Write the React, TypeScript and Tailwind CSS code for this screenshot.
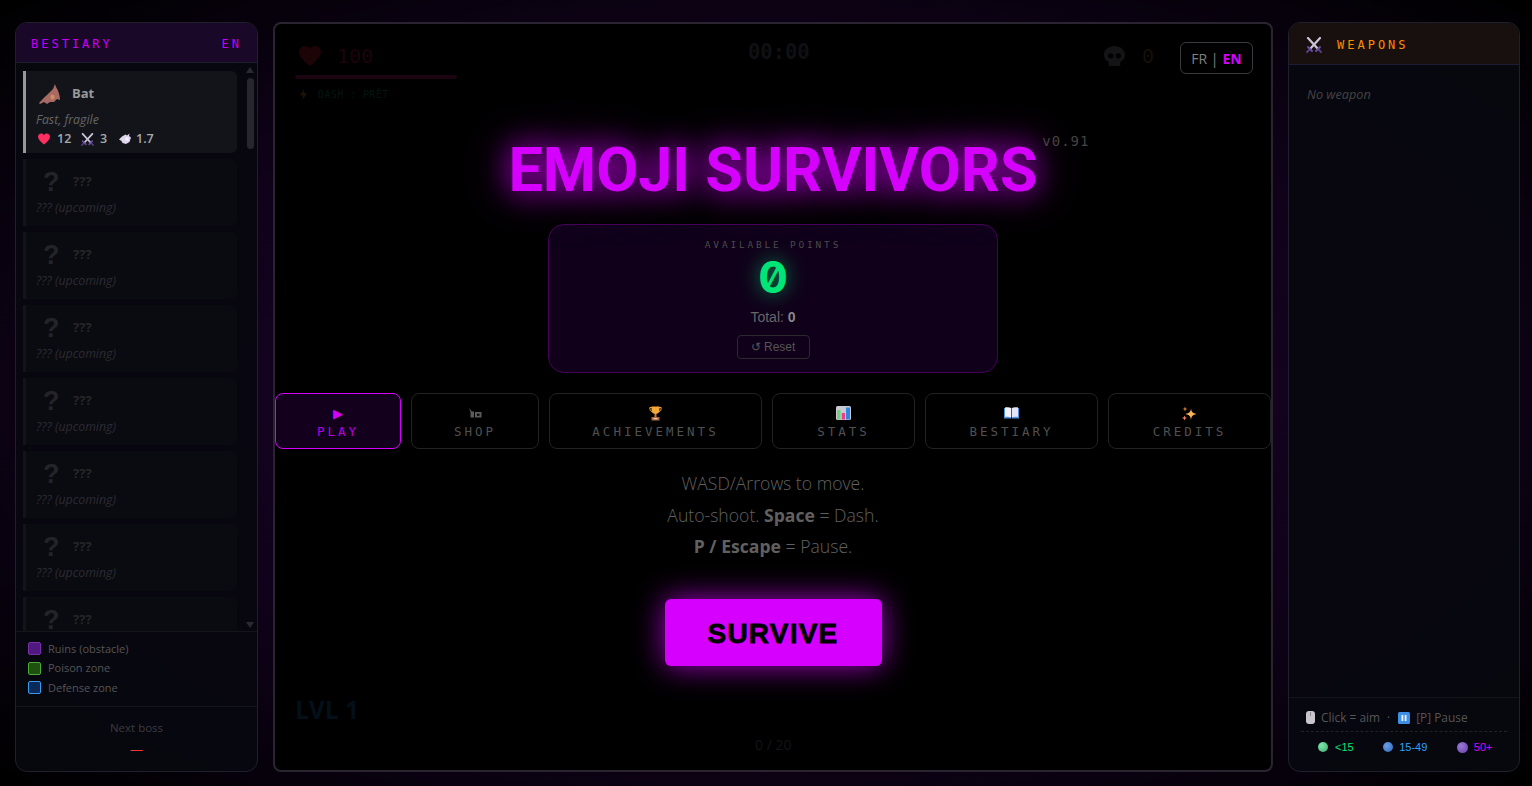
import type { ReactNode } from "react";

const mono = "font-['DejaVu_Sans_Mono',monospace]";

const UNKNOWN = [0, 1, 2, 3, 4, 5, 6];

const BatIcon = () => (
  <svg width="22" height="21" viewBox="0 0 22 21">
    <path d="M0 19C3 16 5 13 8 11C10 9 12 7 14 5L16 0L17 3C19 6 21 11 21 16L18 15L15 18L11 18L8 20L5 18L1 20Z" fill="#a86a62" />
    <ellipse cx="13.500" cy="13" rx="2" ry="2.500" fill="#d0905a" />
  </svg>
);

const HeartIcon = ({ size = 12, fill = "#ff2f62" }: { size?: number; fill?: string }) => (
  <svg width={size} height={size} viewBox="0 0 24 24">
    <path d="M12 23C5 17 0 12.500 0 7.500C0 3.500 3 1 6.500 1C9 1 11 2.300 12 4.500C13 2.300 15 1 17.500 1C21 1 24 3.500 24 7.500C24 12.500 19 17 12 23Z" fill={fill} />
  </svg>
);

const SwordsIcon = ({ size = 13 }: { size?: number }) => (
  <svg width={size} height={size} viewBox="0 0 16 16" fill="none" strokeLinecap="round">
    <path d="M2 1L12 12M14 1L4 12" stroke="#c9c5d6" strokeWidth="2.200" />
    <path d="M10 14L14 10M6 14L2 10" stroke="#6d4fa3" strokeWidth="1.800" />
    <path d="M13 13L15 15M3 13L1 15" stroke="#5a3f8c" strokeWidth="1.800" />
  </svg>
);

const PuffIcon = () => (
  <svg width="12" height="12" viewBox="0 0 12 12">
    <path d="M0 6.500L3 3.500L6.500 1.500L8 2.500L10.500 0.500L10 3L12 4.500L10.500 9L7 11L3.500 10L2.500 8Z" fill="#ddd6ec" />
    <circle cx="8" cy="6" r="1.800" fill="#f6f3fc" />
  </svg>
);

const BoltIcon = () => (
  <svg width="7" height="11" viewBox="0 0 7 11">
    <path d="M4 0L0 6.500H3L2.500 11L7 4H3.800Z" fill="#1e1204" />
  </svg>
);

const SkullIcon = () => (
  <svg width="23" height="23" viewBox="0 0 24 24">
    <path fillRule="evenodd" d="M12 1C5.500 1 1 5.200 1 10.500C1 14 3 16.500 6 17.800V22H18V17.800C21 16.500 23 14 23 10.500C23 5.200 18.500 1 12 1ZM8 8.500A2.800 2.800 0 1 1 8 14.100A2.800 2.800 0 1 1 8 8.500ZM16 8.500A2.800 2.800 0 1 1 16 14.100A2.800 2.800 0 1 1 16 8.500Z" fill="#141416" />
  </svg>
);

const ShopIcon = () => (
  <svg width="13" height="10" viewBox="0 0 13 10" fill="#5a5a5a">
    <path d="M0 0L3 3.500H5V9.500H1.500V4Z" />
    <path fillRule="evenodd" d="M6 4H12.500V9.500H6ZM8 5.800V7.800H10.500V5.800Z" />
  </svg>
);

const TrophyIcon = () => (
  <svg width="13" height="15" viewBox="0 0 13 15" fill="none">
    <path d="M2.800 1.500H0.800C0.800 4 1.500 5.500 3.500 6M10.200 1.500H12.200C12.200 4 11.500 5.500 9.500 6" stroke="#f0a53a" strokeWidth="1" />
    <path d="M2.500 0.500H10.500V4C10.500 6.500 8.500 8 6.500 8C4.500 8 2.500 6.500 2.500 4Z" fill="#f5a83a" />
    <rect x="5.500" y="8" width="2" height="3" fill="#c97b2c" />
    <rect x="2.500" y="11" width="8" height="3.500" rx="0.500" fill="#a86a42" />
    <rect x="4.500" y="12" width="4" height="1.300" fill="#e8c9a0" />
  </svg>
);

const ChartIcon = () => (
  <svg width="15" height="14" viewBox="0 0 15 14">
    <rect width="15" height="14" rx="1.500" fill="#c9c9d2" />
    <rect x="1" y="4" width="3.500" height="9.500" fill="#6fd37a" />
    <rect x="5.800" y="7" width="3.200" height="6.500" fill="#ee3f86" />
    <rect x="10" y="1.500" width="4" height="12" fill="#2f86e0" />
  </svg>
);

const BookIcon = () => (
  <svg width="15" height="12" viewBox="0 0 15 12">
    <path d="M0 1H7V11.500H0Z" fill="#4f8fe0" />
    <path d="M8 1H15V11.500H8Z" fill="#4f8fe0" />
    <path d="M1 0.500C3 0 5.500 0 7.200 1V10.500C5.500 9.700 3 9.700 1 10Z" fill="#f2f2fa" />
    <path d="M14 0.500C12 0 9.500 0 7.800 1V10.500C9.500 9.700 12 9.700 14 10Z" fill="#e4e4f4" />
  </svg>
);

const SparkleIcon = () => (
  <svg width="15" height="15" viewBox="0 0 15 15">
    <path d="M9 2.500C9.500 6 10.500 7 14.500 8C10.500 9 9.500 10 9 14C8.500 10 7.500 9 3.500 8C7.500 7 8.500 6 9 2.500Z" fill="#fdb55a" />
    <path d="M3 0.500L3.600 2.400L5.500 3L3.600 3.600L3 5.500L2.400 3.600L0.500 3L2.400 2.400Z" fill="#f7913f" />
    <path d="M2.500 9.500L3.200 11.300L5 12L3.200 12.700L2.500 14.500L1.800 12.700L0 12L1.800 11.300Z" fill="#f2805a" />
  </svg>
);

const MouseIcon = () => (
  <svg width="9" height="13" viewBox="0 0 9 13">
    <rect width="9" height="13" rx="3" fill="#c9c5cc" />
    <rect x="4" y="1" width="1" height="4" fill="#8d8990" />
  </svg>
);

const PauseIcon = () => (
  <svg width="12" height="12" viewBox="0 0 12 12">
    <rect width="12" height="12" rx="1.500" fill="#3f8fe6" />
    <rect x="3.500" y="3" width="1.800" height="6" fill="#e8f2ff" />
    <rect x="6.700" y="3" width="1.800" height="6" fill="#e8f2ff" />
  </svg>
);

const Tab = ({ icon, label, width, active }: { icon: ReactNode; label: string; width: string; active?: boolean }) => (
  <button
    className={`${width} h-[56px] shrink-0 flex flex-col items-center pt-[11px] rounded-lg border ${
      active ? "border-[#d600ff] bg-[#12001c] text-[#b800dc]" : "border-[#222] text-[#505050]"
    }`}
  >
    <span className={`h-[16px] flex items-center text-[13px] leading-[16px] ${active ? "text-[#d600ff]" : ""}`}>{icon}</span>
    <span className={`${mono} mt-[3px] text-[12.500px] leading-[16px] tracking-[3px]`}>{label}</span>
  </button>
);

const LegendRow = ({ label, box }: { label: string; box: string }) => (
  <div className="flex items-center gap-[7px] h-[19.500px]">
    <span className={`w-[13px] h-[13px] rounded-[2px] border ${box}`} />
    <span className="text-[11px] text-[#555]">{label}</span>
  </div>
);

export default function App() {
  return (
    <div className="w-[1532px] h-[786px] overflow-hidden bg-[radial-gradient(ellipse_at_center,#1f0530_0%,#0f0219_60%,#000_100%)] font-['Open_Sans',sans-serif] flex gap-[15px] pl-[15px] pt-[22px]">
      {/* Left: bestiary */}
      <aside className="w-[243px] h-[750px] shrink-0 flex flex-col rounded-xl border border-[#20202c] bg-[#08080f]/90 overflow-hidden">
        <div className="h-[40px] shrink-0 flex items-center justify-between pt-[2px] pl-[15px] pr-[15px] bg-[#1a0828] border-b border-[#1e1e2c]">
          <span className={`${mono} text-[12px] tracking-[3px] text-[#c800f5]`}>BESTIARY</span>
          <span className={`${mono} text-[12px] tracking-[3px] text-[#c800f5]`}>EN</span>
        </div>
        <div className="relative flex-1 overflow-hidden pl-[7px] pt-[8px] flex flex-col gap-[6px]">
          <div className="w-[214px] h-[82px] shrink-0 rounded-r-md border-l-[3px] border-[#999] bg-[#12141a] pl-[10px] pt-[9px]">
            <div className="flex items-center gap-[11px] h-[28px] pl-[3px]">
              <BatIcon />
              <span className="text-[13px] font-bold text-[#999]">Bat</span>
            </div>
            <div className="text-[12.300px] italic text-[#666] mt-[3px]">Fast, fragile</div>
            <div className="mt-[1px] flex items-center text-[12.500px] font-semibold text-[#aaa] leading-[18px] pl-[2px]">
              <HeartIcon />
              <span className="ml-[7px] w-[24px]">12</span>
              <SwordsIcon />
              <span className="ml-[6px] w-[19px]">3</span>
              <PuffIcon />
              <span className="ml-[5px]">1.7</span>
            </div>
          </div>
          {UNKNOWN.map((i) => (
            <div key={i} className="w-[214px] h-[67px] shrink-0 rounded-r-md border-l-[3px] border-[#131318] bg-[#0a0a11] pl-[10px] pt-[9px]">
              <div className="flex items-center h-[28px]">
                <span className="w-[37px] pl-[7px] font-['Liberation_Sans',sans-serif] text-[27px] font-bold leading-none text-[#242428]">?</span>
                <span className="text-[13px] font-bold text-[#262628]">???</span>
              </div>
              <div className="text-[12.300px] italic text-[#2c2c32] mt-[3px]">??? (upcoming)</div>
            </div>
          ))}
          {/* scrollbar */}
          <div className="absolute right-[3px] top-0 bottom-0 w-[8px]">
            <div className="absolute top-[4px] left-0 border-x-4 border-x-transparent border-b-[6px] border-b-[#2a2a30]" />
            <div className="absolute top-[15px] left-[1px] w-[7px] h-[71px] rounded-full bg-[#26262c]" />
            <div className="absolute bottom-[3px] left-0 border-x-4 border-x-transparent border-t-[6px] border-t-[#2a2a30]" />
          </div>
        </div>
        <div className="h-[75px] shrink-0 border-t border-[#14141a] px-[12px] pt-[7px]">
          <LegendRow label="Ruins (obstacle)" box="bg-[#4f1a80] border-[#7a2ea8]" />
          <LegendRow label="Poison zone" box="bg-[#1f5010] border-[#4fa83a]" />
          <LegendRow label="Defense zone" box="bg-[#0a2a5a] border-[#3a9aee]" />
        </div>
        <div className="h-[65px] shrink-0 border-t border-[#14141a] flex flex-col items-center pt-[12px]">
          <span className="text-[11.500px] text-[#3c3c40]">Next boss</span>
          <span className="text-[13px] leading-[16px] mt-[5px] text-[#ff3333]">—</span>
        </div>
      </aside>

      {/* Center: start screen */}
      <main className="relative w-[1000px] h-[750px] shrink-0 rounded-lg border-2 border-[#2a2430] bg-black flex flex-col items-center overflow-hidden">
        {/* faded HUD under the menu */}
        <div className="absolute left-[20px] top-[18px] w-[162px]">
          <div className={`${mono} flex items-center gap-[16px] pl-[4px] text-[20px] leading-[28px] text-[#1c030c]`}>
            <HeartIcon size={22} fill="#1c0407" />
            <span>100</span>
          </div>
          <div className="mt-[5px] h-[4px] rounded-full bg-[#1c0410]" />
          <div className={`${mono} mt-[8px] flex items-center gap-[11px] pl-[5px] text-[10px] tracking-[0.400px] text-[#04160e]`}>
            <BoltIcon />
            <span>DASH : PRÊT</span>
          </div>
        </div>
        <div className={`${mono} absolute left-[473px] top-[13px] text-[20.500px] font-bold text-[#101014]`}>00:00</div>
        <div className={`${mono} absolute left-[828px] top-[18px] flex items-center gap-[16px] text-[20px] leading-[28px] text-[#171005]`}>
          <SkullIcon />
          <span>0</span>
        </div>
        <div className="absolute left-[20px] top-[668px] text-[24.500px] font-bold text-[#03101a]">LVL 1</div>
        <div className="absolute left-[480px] top-[710px] text-[14px] text-[#141416]">0 / 20</div>

        <div className="absolute right-[18px] top-[18px] h-[32px] w-[73px] flex items-center justify-center rounded-md border border-[#3a3a3e] text-[14px] text-[#808080] bg-black">
          <span>FR | </span>
          <span className="ml-[4px] font-bold text-[#d600ff]">EN</span>
        </div>

        {/* title */}
        <div className="relative mt-[109px] h-[72px] flex items-center">
          <h1 className="pt-[3px] font-['Roboto',sans-serif] text-[61px] font-bold leading-none text-[#d600ff] [text-shadow:0_0_30px_#d600ff,0_0_60px_#d600ff60]">
            EMOJI SURVIVORS
          </h1>
          <span className={`${mono} absolute -right-[52px] top-[-2px] text-[14px] tracking-[1px] text-[#444]`}>v0.91</span>
        </div>

        {/* points */}
        <div className="mt-[19px] w-[450px] h-[149px] rounded-2xl border border-[#450058] bg-[#10001a] flex flex-col items-center pt-[13px]">
          <div className={`${mono} text-[9.500px] tracking-[2.800px] text-[#4c4c4c]`}>AVAILABLE POINTS</div>
          <div className="mt-[1px] font-['Inter',sans-serif] slashed-zero text-[44px] font-bold leading-[48px] text-[#00e676] [text-shadow:0_0_20px_#00e676a0]">0</div>
          <div className="mt-[6px] font-['Liberation_Sans',sans-serif] text-[14px] text-[#666]">
            Total: <b className="text-[#888]">0</b>
          </div>
          <button className="mt-[7px] h-[24px] w-[73px] rounded-[4px] border border-[#2a2a2e] text-[12px] text-[#555] font-['Liberation_Sans',sans-serif]">
            ↺ Reset
          </button>
        </div>

        {/* menu tabs */}
        <div className="mt-[20px] w-[996px] flex gap-[10px]">
          <Tab icon="▶" label="PLAY" width="w-[126px]" active />
          <Tab icon={<ShopIcon />} label="SHOP" width="w-[128px]" />
          <Tab icon={<TrophyIcon />} label="ACHIEVEMENTS" width="w-[213px]" />
          <Tab icon={<ChartIcon />} label="STATS" width="w-[143px]" />
          <Tab icon={<BookIcon />} label="BESTIARY" width="w-[173px]" />
          <Tab icon={<SparkleIcon />} label="CREDITS" width="w-[163px]" />
        </div>

        {/* help */}
        <div className="mt-[19px] text-[17.600px] leading-[31.500px] text-[#606060] text-center font-light">
          <p>WASD/Arrows to move.</p>
          <p>
            Auto-shoot. <b className="font-bold">Space</b> = Dash.
          </p>
          <p>
            <b className="font-bold">P / Escape</b> = Pause.
          </p>
        </div>

        <button className="mt-[36px] w-[217px] h-[67px] pt-[4px] rounded-md bg-[#d600ff] text-black text-[28px] font-bold font-['Liberation_Sans',sans-serif] tracking-[1.200px] shadow-[0_0_30px_#d600ffc0]">
          <span className="[-webkit-text-stroke:0.8px_black]">SURVIVE</span>
        </button>
      </main>

      {/* Right: weapons */}
      <aside className="w-[232px] h-[750px] shrink-0 flex flex-col rounded-xl border border-[#20202c] bg-[#08080f]/90 overflow-hidden">
        <div className="h-[42px] shrink-0 flex items-center pt-[2px] pl-[17px] gap-[15px] bg-[#17100f] border-b border-[#1c1c34]">
          <SwordsIcon size={16} />
          <span className={`${mono} text-[12px] tracking-[3px] text-[#ff8c00]`}>WEAPONS</span>
        </div>
        <div className="flex-1 pl-[18px] pt-[20px] text-[12.700px] italic text-[#444]">No weapon</div>
        <div className="h-[74px] shrink-0 border-t border-[#14141a] px-[12px] pt-[10px]">
          <div className="h-[24px] pb-[4px] pl-[5px] flex items-center text-[11.900px] text-[#555] border-b border-dashed border-[#222]">
            <MouseIcon />
            <span className="ml-[6px]">Click = aim</span>
            <span className="ml-[7px]">·</span>
            <span className="ml-[8px]"><PauseIcon /></span>
            <span className="ml-[6px]">[P] Pause</span>
          </div>
          <div className="mt-[7px] pl-[17px] flex gap-[29.500px] text-[11px] font-['Liberation_Sans',sans-serif]">
            <span className="flex items-center gap-[7px] text-[#00e676]">
              <span className="w-[10px] h-[10px] rounded-full bg-[radial-gradient(circle_at_35%_35%,#7de8a8,#3aa870)]" />
              &lt;15
            </span>
            <span className="flex items-center gap-[6px] text-[#2aa0ff]">
              <span className="w-[10px] h-[10px] rounded-full bg-[radial-gradient(circle_at_35%_35%,#6a9fe8,#2f64b8)]" />
              15-49
            </span>
            <span className="flex items-center gap-[6px] text-[#d600ff]">
              <span className="w-[11px] h-[11px] rounded-full bg-[radial-gradient(circle_at_35%_35%,#9a78d8,#6a40a8)]" />
              50+
            </span>
          </div>
        </div>
      </aside>
    </div>
  );
}
